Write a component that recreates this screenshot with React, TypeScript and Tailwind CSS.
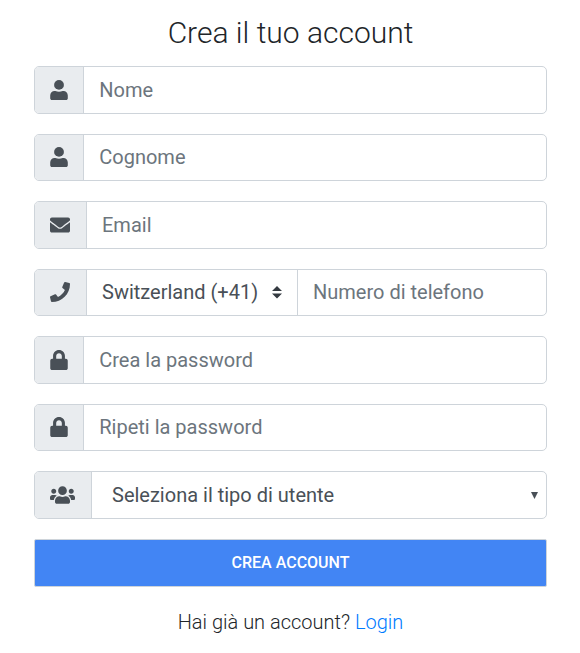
import type { ReactNode } from "react";
import { FaEnvelope, FaPhone, FaLock, FaUsers } from "react-icons/fa";

function Row({ icon, w, children }: { icon: ReactNode; w: string; children: ReactNode }) {
  return (
    <div className="mb-[20px] flex h-[47.5px] overflow-hidden rounded-[5px] border border-[#ced4da] text-[20px] text-[#6c757d]">
      <div className={`flex shrink-0 items-center border-r border-[#ced4da] bg-[#e9ecef] pl-[15.4px] text-[#495057] ${w}`}>{icon}</div>
      {children}
    </div>
  );
}

function Placeholder({ children }: { children: ReactNode }) {
  return <span className="flex items-center pl-[15.25px]">{children}</span>;
}

function UserIcon() {
  return (
    <svg viewBox="0 0 18 20" className="h-5 w-[18px] fill-current">
      <circle cx="9" cy="4.9" r="4.9" />
      <path d="M4.6 11.1h.8c1.1.5 2.3.7 3.6.7s2.5-.2 3.6-.7h.8c2.5 0 4.4 2 4.4 4.5v2.6c0 1-.8 1.8-1.8 1.8H2c-1 0-1.8-.8-1.8-1.8v-2.6c0-2.5 1.9-4.5 4.4-4.5z" />
    </svg>
  );
}

export default function App() {
  return (
    <main className="h-[653px] bg-white pt-[14px] pr-[33px] pl-[34px] font-[Roboto,sans-serif] text-[#212529]">
      <h1 className="mb-[14px] text-center text-[30px] leading-[38px] font-light">Crea il tuo account</h1>
      <Row w="w-[49px]" icon={<UserIcon />}><Placeholder>Nome</Placeholder></Row>
      <Row w="w-[49px]" icon={<UserIcon />}><Placeholder>Cognome</Placeholder></Row>
      <Row w="w-[52px]" icon={<FaEnvelope />}><span className="flex items-center pl-[15px]">Email</span></Row>
      <Row w="w-[52px]" icon={<FaPhone />}>
        <span className="flex w-[211px] shrink-0 items-center justify-between border-r border-[#ced4da] pr-[15px] pl-[15px] text-[#495057]">
          Switzerland (+41)
          <svg viewBox="0 0 4 5" className="h-[12.5px] w-[10px] fill-[#343a40]"><path d="M2 0L0 2h4zm0 5L0 3h4z" /></svg>
        </span>
        <span className="flex items-center pl-[15px]">Numero di telefono</span>
      </Row>
      <Row w="w-[49px]" icon={<FaLock className="h-5 w-[18px]" />}><Placeholder>Crea la password</Placeholder></Row>
      <Row w="w-[49px]" icon={<FaLock className="h-5 w-[18px]" />}><Placeholder>Ripeti la password</Placeholder></Row>
      <Row w="w-[57px]" icon={<FaUsers className="h-5 w-[25px]" />}>
        <span className="flex flex-1 items-center justify-between pr-[8px] pl-[20px] text-[#495057]">
          Seleziona il tipo di utente
          <svg viewBox="0 0 7 7" className="mt-[2px] h-[7px] w-[7px] fill-[#495057]"><path d="M0 0h7L3.5 7z" /></svg>
        </span>
      </Row>
      <button className="block h-[48px] w-full rounded-[2px] border border-[#ced4da] bg-[#4285f4] text-[16px] font-medium text-white">CREA ACCOUNT</button>
      <p className="mt-[20.5px] text-center text-[20px] leading-[30px] font-light">Hai già un account? <a className="text-[#007bff]">Login</a></p>
    </main>
  );
}
